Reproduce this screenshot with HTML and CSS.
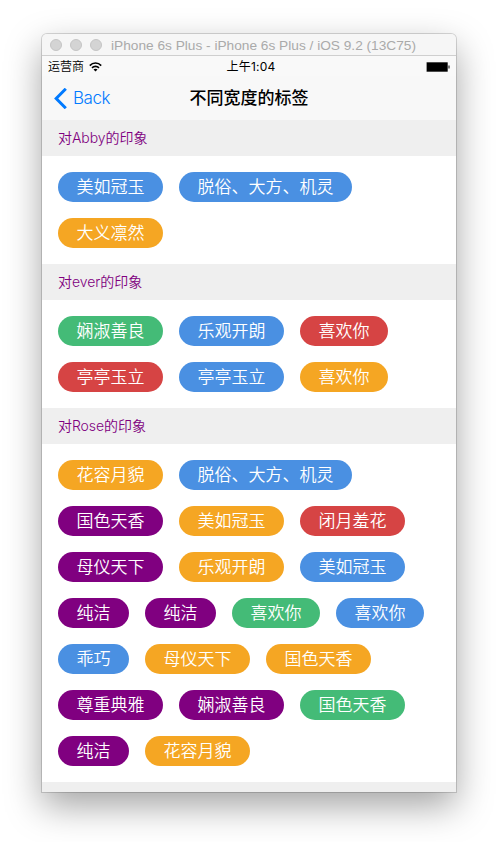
FILE: index.html
```html
<!DOCTYPE html>
<html lang="zh-CN">
<head>
<meta charset="utf-8">
<title>不同宽度的标签</title>
<link rel="stylesheet" href="styles.css">
</head>
<body>
<main class="window">
  <header class="titlebar">
    <i class="light"></i><i class="light"></i><i class="light"></i>
    <svg class="window-title" width="310" height="18"><text x="0" y="13.7" textLength="305" lengthAdjust="spacingAndGlyphs">iPhone 6s Plus - iPhone 6s Plus / iOS 9.2 (13C75)</text></svg>
  </header>
  <div class="statusbar">
    <div class="carrier"><span>运营商</span>
      <svg width="13" height="10" viewBox="0 0 13 10" fill="none" stroke="#000" stroke-width="1.6"><path d="M.8 3.6C4 .2 9 .2 12.2 3.6M3 5.9C5 3.9 8 3.9 10 5.9"/><path d="M6.5 9.6L4.5 7.5C5.7 6.5 7.3 6.5 8.500 7.5Z" fill="#000" stroke="none"/></svg>
    </div>
    <span class="time">上午1:04</span>
    <svg class="battery" width="24" height="10" viewBox="0 0 24 10"><rect x="0" y="0" width="22" height="10" rx="1" fill="#999"/><rect x="1" y="0.5" width="20.5" height="9" fill="#000"/><rect x="22.5" y="3.5" width="1" height="3" fill="#000"/></svg>
  </div>
  <nav class="navbar">
    <a class="back"><svg width="13" height="21" viewBox="0 0 13 21" fill="none" stroke="#007aff" stroke-width="3"><path d="M11.8 .8L2.200 10.500L11.800 20.200"/></svg><span>Back</span></a>
    <h1>不同宽度的标签</h1>
  </nav>
  <section>
    <h2>对Abby的印象</h2>
    <div class="tags">
      <span class="tag blue">美如冠玉</span>
      <span class="tag blue">脱俗、大方、机灵</span>
      <span class="tag orange">大义凛然</span>
    </div>
  </section>
  <section>
    <h2>对ever的印象</h2>
    <div class="tags">
      <span class="tag green">娴淑善良</span>
      <span class="tag blue">乐观开朗</span>
      <span class="tag red">喜欢你</span>
      <span class="tag red">亭亭玉立</span>
      <span class="tag blue">亭亭玉立</span>
      <span class="tag orange">喜欢你</span>
    </div>
  </section>
  <section>
    <h2>对Rose的印象</h2>
    <div class="tags">
      <span class="tag orange">花容月貌</span>
      <span class="tag blue">脱俗、大方、机灵</span>
      <span class="tag purple">国色天香</span>
      <span class="tag orange">美如冠玉</span>
      <span class="tag red">闭月羞花</span>
      <span class="tag purple">母仪天下</span>
      <span class="tag orange">乐观开朗</span>
      <span class="tag blue">美如冠玉</span>
      <span class="tag purple">纯洁</span>
      <span class="tag purple">纯洁</span>
      <span class="tag green">喜欢你</span>
      <span class="tag blue">喜欢你</span>
      <span class="tag blue">乖巧</span>
      <span class="tag orange">母仪天下</span>
      <span class="tag orange">国色天香</span>
      <span class="tag purple">尊重典雅</span>
      <span class="tag purple">娴淑善良</span>
      <span class="tag green">国色天香</span>
      <span class="tag purple">纯洁</span>
      <span class="tag orange">花容月貌</span>
    </div>
  </section>
</main>
</body>
</html>
```
FILE: styles.css
```css
* { box-sizing: border-box; }

body {
  margin: 0;
  height: 842px;
  overflow: hidden;
  background: #fff;
  font-family: Inter, "Noto Sans CJK SC", sans-serif;
}

.window {
  width: 414px;
  height: 758px;
  margin: 34px 0 0 42px;
  border-radius: 5px 5px 0 0;
  background: #efefef;
  box-shadow: 0 0 0 1px rgba(0, 0, 0, .15), 0 14px 36px rgba(0, 0, 0, .36);
}

.titlebar {
  display: flex;
  align-items: center;
  height: 22px;
  padding-left: 8px;
  border-bottom: 1px solid #cfcfcf;
  border-radius: 5px 5px 0 0;
  background: #f6f6f6;
}

.light {
  width: 12px;
  height: 12px;
  margin-right: 8px;
  border: 1px solid #c5c5c5;
  border-radius: 50%;
  background: #d4d4d4;
}

.window-title {
  margin-left: 1px;
  font: 13px "Liberation Sans", sans-serif;
  fill: #aaa;
}

.statusbar {
  display: grid;
  grid-template-columns: 1fr auto 1fr;
  align-items: center;
  height: 20px;
  padding: 1px 6px 0;
  background: #f9f9f9;
  font-size: 12px;
  line-height: 19px;
  font-weight: 350;
}

.carrier { display: flex; align-items: center; gap: 5px; }
.time { font-weight: 400; padding-left: 4px; letter-spacing: .2px; }
.battery { justify-self: end; }

.navbar {
  display: grid;
  grid-template-columns: 1fr auto 1fr;
  align-items: center;
  height: 44px;
  padding: 0 12px;
  background: #f8f8f8;
}

.back {
  display: flex;
  align-items: center;
  gap: 6px;
  color: #007aff;
  font-size: 17px;
  font-weight: 350;
  letter-spacing: -.5px;
}

h1 {
  margin: 0;
  font-size: 17px;
  line-height: 44px;
  font-weight: 500;
}

h2 {
  height: 36px;
  margin: 0;
  padding-left: 16px;
  background: #efefef;
  color: purple;
  font-size: 14px;
  line-height: 36px;
  font-weight: 350;
  letter-spacing: -.05px;
}

.tags {
  display: flex;
  flex-wrap: wrap;
  gap: 16px;
  padding: 16px;
  background: #fff;
}

.tag {
  height: 30px;
  padding: 0 18.5px;
  border-radius: 15px;
  color: #fff;
  font-size: 17px;
  line-height: 30px;
  font-weight: 350;
  white-space: nowrap;
}

.blue { background: #4a90e2; }
.orange { background: #f5a623; }
.green { background: #44bb77; }
.red { background: #d64444; }
.purple { background: purple; }
```
